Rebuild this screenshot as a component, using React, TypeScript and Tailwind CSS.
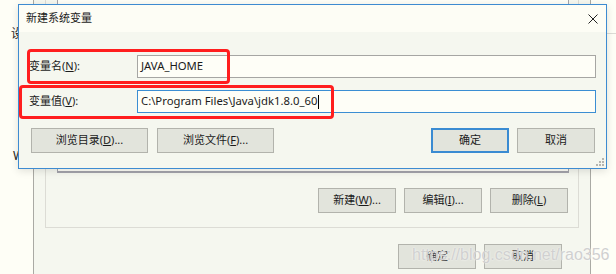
import { type ReactNode } from "react";

const ui = "font-['Noto_Sans','Noto_Sans_CJK_SC',sans-serif] text-[#1b1b1b]";

function Btn({
  children,
  className = "",
  primary = false,
}: {
  children: ReactNode;
  className?: string;
  primary?: boolean;
}) {
  return (
    <div
      className={`flex h-[25px] items-center justify-center bg-[#e2e4dc] text-[11px] ${
        primary ? "border-2 border-[#3a8bd2]" : "border border-[#b2b3ac]"
      } ${className}`}
    >
      {children}
    </div>
  );
}

// access key in brackets, underlined
function Key({ k }: { k: string }) {
  return (
    <>
      (<u className="underline-offset-1">{k}</u>)
    </>
  );
}

function Field({
  label,
  k,
  value,
  focused = false,
}: {
  label: string;
  k: string;
  value: string;
  focused?: boolean;
}) {
  return (
    <div className="flex h-[23px] items-center">
      <div className="w-[108px] text-[11px]">
        {label}
        <Key k={k} />:
      </div>
      <div
        className={`flex h-[23px] flex-1 items-center bg-[#fefef7] pl-[3px] text-[11.3px] border ${
          focused ? "border-[#3b8ed3]" : "border-[#a6a6a3]"
        }`}
      >
        {value}
        {focused && <span className="ml-px h-[14px] w-px bg-black" />}
      </div>
    </div>
  );
}

function BehindWindow() {
  return (
    <div className="absolute left-[33px] top-0 flex h-[274px] w-[558px] flex-col border-x border-[#aaaaa4] bg-[#f5f7ef]">
      <div className="-mt-[20px] ml-[11px] flex h-[248px] w-[534px] flex-col border border-[#dcdcd5]">
        <div className="ml-[11px] h-[192px] w-[512px] border border-b-2 border-[#a3a3ab] bg-[#fefef7]" />
        <div className="mt-[15px] flex justify-end gap-2 pr-[10px]">
          <Btn className="w-[78px]">
            新建<Key k="W" />...
          </Btn>
          <Btn className="w-[78px]">
            编辑<Key k="I" />...
          </Btn>
          <Btn className="w-[78px]">
            删除<Key k="L" />
          </Btn>
        </div>
      </div>
      <div className="mt-[16px] flex justify-end gap-2 pr-[28px]">
        <Btn className="w-[78px]">确定</Btn>
        <Btn className="w-[78px]">取消</Btn>
      </div>
    </div>
  );
}

function Dialog() {
  return (
    <div className="absolute left-[18px] top-[4px] flex h-[165px] w-[589px] flex-col border border-[#3d8bd1] bg-[#f5f7ef] shadow-[0_2px_8px_rgba(0,0,0,0.12)]">
      <div className="flex h-[27px] items-center justify-between bg-[#fdfdf5] pl-[7px] pr-[8px]">
        <span className="text-[11px]">新建系统变量</span>
        <svg width="10" height="10" viewBox="0 0 10 10">
          <path d="M0.5 0.5L9.5 9.5M9.5 0.5L0.5 9.5" stroke="#222" strokeWidth="1" />
        </svg>
      </div>
      <div className="relative flex-1 px-[10px] pt-[23px]">
        <Field label="变量名" k="N" value="JAVA_HOME" />
        <div className="mt-[12px]">
          <Field label="变量值" k="V" value="C:\Program Files\Java\jdk1.8.0_60" focused />
        </div>
        <div className="mt-[15px] flex">
          <Btn className="ml-[2px] w-[117px]">
            浏览目录<Key k="D" />...
          </Btn>
          <Btn className="ml-[9px] w-[117px]">
            浏览文件<Key k="F" />...
          </Btn>
          <Btn primary className="ml-auto w-[78px]">
            确定
          </Btn>
          <Btn className="ml-[8px] mr-px w-[78px]">取消</Btn>
        </div>

        {/* red annotation boxes */}
        <div className="absolute left-[8px] top-[17px] h-[35px] w-[203px] rounded-[4px] border-[3px] border-[#ff1e1e]" />
        <div className="absolute left-0 top-[53px] h-[34px] w-[315px] rounded-[4px] border-[3px] border-[#ff1e1e]" />

        <svg className="absolute bottom-[2px] right-[2px]" width="8" height="8" viewBox="0 0 8 8">
          <rect x="6" y="0" width="2" height="2" fill="#b5b5b0" />
          <rect x="3" y="3" width="2" height="2" fill="#b5b5b0" />
          <rect x="6" y="3" width="2" height="2" fill="#b5b5b0" />
          <rect x="0" y="6" width="2" height="2" fill="#b5b5b0" />
          <rect x="3" y="6" width="2" height="2" fill="#b5b5b0" />
          <rect x="6" y="6" width="2" height="2" fill="#b5b5b0" />
        </svg>
      </div>
    </div>
  );
}

export default function App() {
  return (
    <div className={`relative h-[274px] w-[616px] overflow-hidden bg-[#fefef6] ${ui}`}>
      <span className="absolute left-[11px] top-[25px] text-[12px]">设</span>
      <span className="absolute left-[13px] top-[147px] text-[12px]">W</span>
      <div className="absolute left-[606px] top-[33px] h-px w-[10px] bg-[#dcdcd6]" />

      <BehindWindow />
      <Dialog />

      <div className="absolute left-[412px] top-[246px] font-['Liberation_Sans',Arial,sans-serif] text-[16px] leading-[18px] text-[#d0d0d0] [text-shadow:0_0_2px_#ffffff]">
        https://blog.csdn.net/rao356
      </div>
    </div>
  );
}
